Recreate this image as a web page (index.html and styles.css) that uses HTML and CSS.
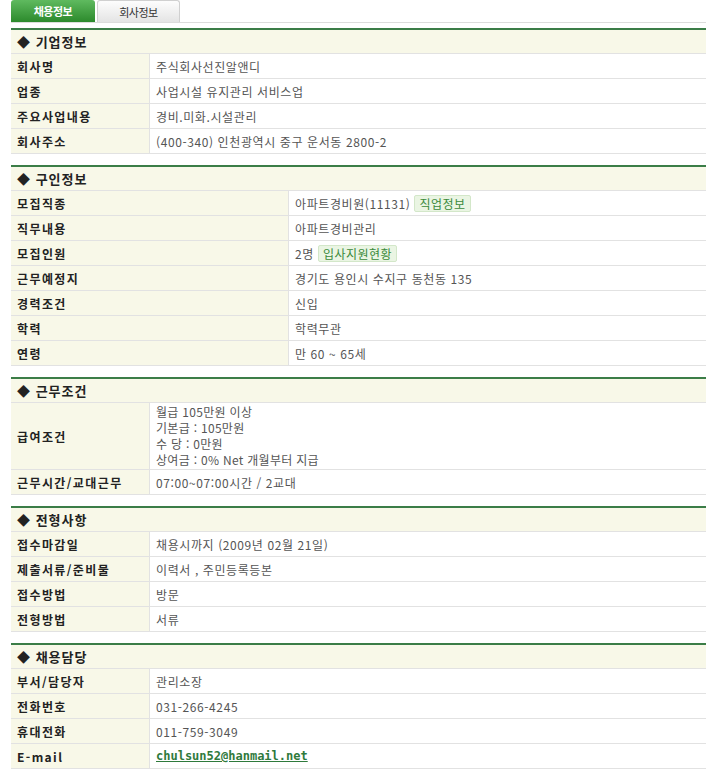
FILE: index.html
```html
<!DOCTYPE html>
<html lang="ko">
<head>
<meta charset="utf-8">
<title>채용정보</title>
<link rel="stylesheet" href="styles.css">
</head>
<body>
<div class="page">
  <div class="tabs">
    <div class="tab tab-on">채용정보</div>
    <div class="tab tab-off">회사정보</div>
  </div>

  <div class="sec">
    <div class="sec-head">◆ 기업정보</div>
    <div class="row"><div class="lbl">회사명</div><div class="val">주식회사선진알앤디</div></div>
    <div class="row"><div class="lbl">업종</div><div class="val">사업시설 유지관리 서비스업</div></div>
    <div class="row"><div class="lbl">주요사업내용</div><div class="val">경비.미화.시설관리</div></div>
    <div class="row"><div class="lbl">회사주소</div><div class="val">(400-340) 인천광역시 중구 운서동 2800-2</div></div>
  </div>

  <div class="sec sec-wide">
    <div class="sec-head">◆ 구인정보</div>
    <div class="row"><div class="lbl">모집직종</div><div class="val">아파트경비원(11131) <span class="badge">직업정보</span></div></div>
    <div class="row"><div class="lbl">직무내용</div><div class="val">아파트경비관리</div></div>
    <div class="row"><div class="lbl">모집인원</div><div class="val">2명 <span class="badge">입사지원현황</span></div></div>
    <div class="row"><div class="lbl">근무예정지</div><div class="val">경기도 용인시 수지구 동천동 135</div></div>
    <div class="row"><div class="lbl">경력조건</div><div class="val">신입</div></div>
    <div class="row"><div class="lbl">학력</div><div class="val">학력무관</div></div>
    <div class="row"><div class="lbl">연령</div><div class="val">만 60 ~ 65세</div></div>
  </div>

  <div class="sec">
    <div class="sec-head">◆ 근무조건</div>
    <div class="row"><div class="lbl">급여조건</div><div class="val val-multi"><div>월급 105만원 이상</div><div>기본급 : 105만원</div><div>수 당 : 0만원</div><div>상여금 : 0% Net 개월부터 지급</div></div></div>
    <div class="row"><div class="lbl">근무시간/교대근무</div><div class="val">07:00~07:00시간 / 2교대</div></div>
  </div>

  <div class="sec">
    <div class="sec-head">◆ 전형사항</div>
    <div class="row"><div class="lbl">접수마감일</div><div class="val">채용시까지 (2009년 02월 21일)</div></div>
    <div class="row"><div class="lbl">제출서류/준비물</div><div class="val">이력서 , 주민등록등본</div></div>
    <div class="row"><div class="lbl">접수방법</div><div class="val">방문</div></div>
    <div class="row"><div class="lbl">전형방법</div><div class="val">서류</div></div>
  </div>

  <div class="sec">
    <div class="sec-head">◆ 채용담당</div>
    <div class="row"><div class="lbl">부서/담당자</div><div class="val">관리소장</div></div>
    <div class="row"><div class="lbl">전화번호</div><div class="val">031-266-4245</div></div>
    <div class="row"><div class="lbl">휴대전화</div><div class="val">011-759-3049</div></div>
    <div class="row"><div class="lbl">E-mail</div><div class="val"><a class="mail" href="#">chulsun52@hanmail.net</a></div></div>
  </div>
</div>
</body>
</html>
```

FILE: styles.css
```css
* { box-sizing: border-box; }
body {
  margin: 0;
  background: #fff;
  font-family: "Noto Sans CJK KR", "Noto Sans", sans-serif;
  font-size: 12px;
  color: #555;
}
.page {
  width: 706px;
  padding-left: 11px;
}
.tabs {
  display: flex;
  gap: 2px;
  height: 23px;
  border-bottom: 1px solid #dcdcdc;
}
.tab {
  width: 84px;
  height: 22px;
  display: flex;
  align-items: center;
  justify-content: center;
  font-size: 11px;
  border-radius: 3px 3px 0 0;
  letter-spacing: -0.5px;
}
.tab-on {
  background: linear-gradient(#5fba5f, #2c8a2c);
  color: #fff;
  font-weight: bold;
}
.tab-off {
  width: 83px;
  background: linear-gradient(#fdfdfd, #e4e4e4);
  border: 1px solid #d0d0d0;
  border-bottom: none;
  color: #333;
}
.sec {
  margin-top: 11px;
  border-top: 2px solid #3b7d47;
}
.tabs + .sec { margin-top: 5px; }
.sec-head {
  height: 24px;
  background: #f8f8e8;
  border-bottom: 1px solid #e2e2e2;
  padding-left: 6px;
  display: flex;
  align-items: center;
  font-size: 13px;
  font-weight: bold;
  color: #222;
  letter-spacing: 1px;
}
.row {
  display: grid;
  grid-template-columns: 139px 1fr;
  border-bottom: 1px solid #e2e2e2;
  min-height: 25px;
}
.sec-wide .row { grid-template-columns: 278px 1fr; }
.lbl {
  background: #f8f8e8;
  border-right: 1px solid #e2e2e2;
  padding-left: 6px;
  display: flex;
  align-items: center;
  font-weight: bold;
  color: #222;
  letter-spacing: 1.4px;
}
.val {
  padding-left: 6px;
  display: flex;
  align-items: center;
  color: #555;
  letter-spacing: 0.6px;
}
.val-multi {
  display: flex;
  flex-direction: column;
  align-items: flex-start;
  justify-content: center;
  padding-top: 1px;
  padding-bottom: 1px;
  line-height: 16px;
  letter-spacing: 0.3px;
}
.val-multi div { height: 16px; }
.badge {
  display: inline-block;
  margin-left: 4px;
  padding: 0 4px;
  height: 17px;
  line-height: 15px;
  background: #eaf5e3;
  border: 1px solid #d3e7c9;
  border-radius: 2px;
  color: #3b8a3b;
  letter-spacing: 0.5px;
}
.mail {
  font-family: "DejaVu Sans Mono", monospace;
  font-weight: bold;
  font-size: 12px;
  color: #2f7a3c;
  text-decoration: underline;
  letter-spacing: 0;
}
```
